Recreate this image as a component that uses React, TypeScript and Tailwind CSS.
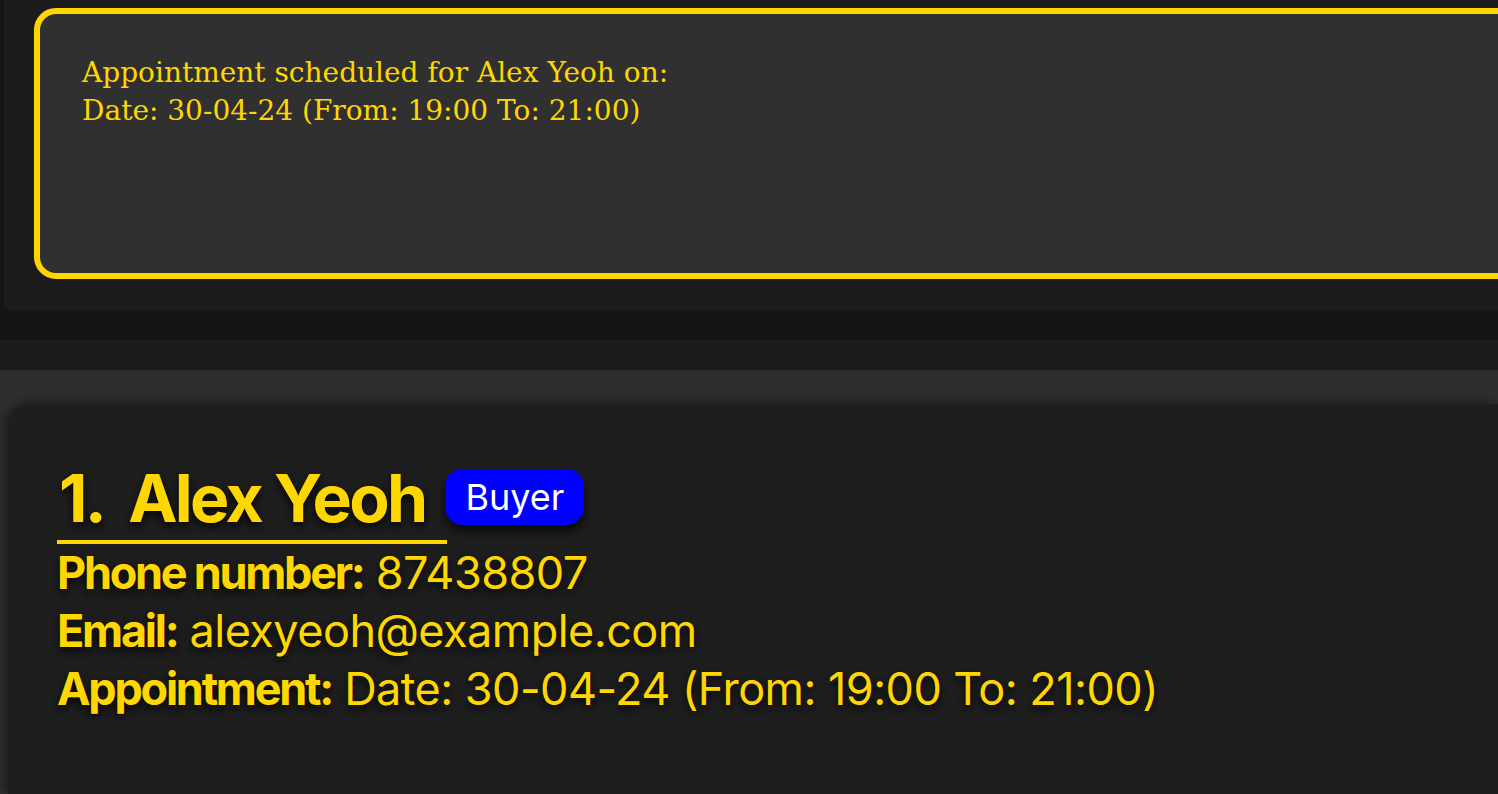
export default function App() {
    return (
        <div className="flex h-[794px] w-[1498px] flex-col overflow-hidden bg-[#151515]">
            {/* result display */}
            <div className="ml-[4px] h-[310px] shrink-0 overflow-hidden rounded-bl-md bg-[#1c1c1c] pl-[30px] pt-[8px]">
                <div className="h-[271px] w-[1520px] rounded-[22px] border-[6px] border-[#FFD700] bg-[#303030] pl-[42px] pt-[40px]">
                    <p
                        className="text-[28px] leading-[38px] text-[#FFD700]"
                        style={{ fontFamily: '"DejaVu Serif", Georgia, serif' }}
                    >
                        Appointment scheduled for Alex Yeoh on:
                        <br />
                        Date: 30-04-24 (From: 19:00 To: 21:00)
                    </p>
                </div>
            </div>

            <div className="h-[30px] shrink-0" />
            <div className="h-[30px] shrink-0 bg-[#1c1c1c]" />

            {/* person list */}
            <div className="flex-1 bg-[#2e2e2e] pl-[8px] pt-[34px]">
                <div
                    className="h-full rounded-tl-[24px] bg-[#1e1e1e] pl-[49px] pt-[58px] shadow-[-4px_-2px_10px_rgba(0,0,0,0.35)]"
                    style={{ fontFamily: 'Inter, "Noto Sans", sans-serif' }}
                >
                    <div className="flex items-center">
                        <div className="border-b-[4px] border-[#FFD700] pl-[2px] pr-[22px] pb-[6px]">
                            <span className="text-[66px] font-bold leading-[72px] tracking-[-0.04em] text-[#FFD700] [text-shadow:0_4px_8px_rgba(0,0,0,0.85)]">
                                1.<span className="ml-[24px]">Alex Yeoh</span>
                            </span>
                        </div>
                        <span className="-ml-[2px] mb-[12px] rounded-[18px] bg-[#0000FF] px-[20px] py-[4px] text-[36px] leading-[48px] text-white shadow-[0_6px_10px_rgba(0,0,0,0.7)]">
                            Buyer
                        </span>
                    </div>
                    <div className="text-[45px] leading-[58px] tracking-[-0.012em] text-[#FFD700] [text-shadow:0_4px_8px_rgba(0,0,0,0.85)]">
                        <p>
                            <span className="font-bold tracking-[-0.05em]">Phone number:</span> 87438807
                        </p>
                        <p>
                            <span className="font-bold tracking-[-0.05em]">Email:</span> alexyeoh@example.com
                        </p>
                        <p>
                            <span className="font-bold tracking-[-0.05em]">Appointment:</span> Date: 30-04-24 (From: 19:00 To: 21:00)
                        </p>
                    </div>
                </div>
            </div>
        </div>
    );
}
